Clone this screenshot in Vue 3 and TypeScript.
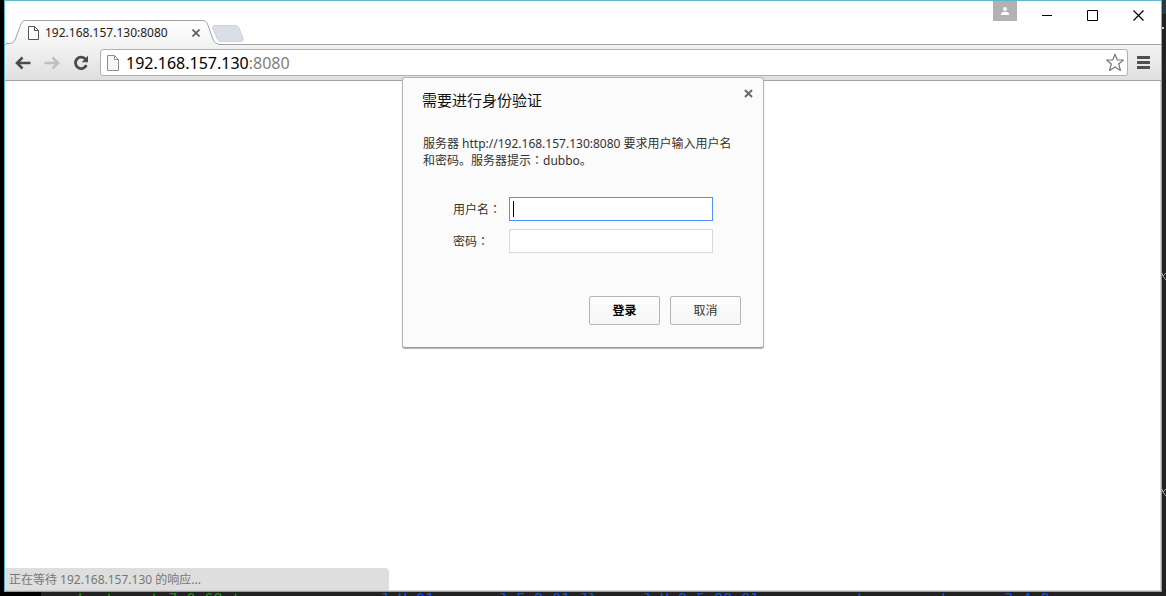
<script setup lang="ts">
import { onMounted, ref } from 'vue'

const host = '192.168.157.130'
const port = ':8080'
const username = ref('')
const password = ref('')
const userField = ref<HTMLInputElement | null>(null)

onMounted(() => userField.value?.focus())
</script>

<template>
  <div class="desktop">
    <div class="browser">
      <header class="titlebar">
        <div class="tab">
          <svg class="tab-shape" width="212" height="25" viewBox="0 0 212 25" aria-hidden="true">
            <defs>
              <linearGradient id="tabFill" x1="0" y1="0" x2="0" y2="1">
                <stop offset="0" stop-color="#ffffff" />
                <stop offset="1" stop-color="#f3f3f3" />
              </linearGradient>
            </defs>
            <path d="M0 25V24H3C6 24 8 22 9 20L15 4C16 1.500 17 .5 20 .5H196C199 .5 200.500 1.500 201.500 4L207 19C208.500 22.500 209 24 212 24V25Z" fill="url(#tabFill)" />
            <path d="M0 23.500H3C6 23.500 8 22 9 20L15 4C16 1.500 17 .5 20 .5H196C199 .5 200.500 1.500 201.500 4L207 19C208.500 22.500 209 23.500 212 23.500" fill="none" stroke="#a3a3a3" />
          </svg>
          <svg class="tab-page" width="11" height="14" viewBox="0 0 11 14" aria-hidden="true">
            <path d="M.5 .5H6.500L10.500 4.500V13.500H.5ZM6.500 .5V4.500H10.500" fill="#fff" stroke="#555" />
          </svg>
          <span class="tab-title">{{ host }}{{ port }}</span>
          <button class="plain tab-close" type="button" aria-label="关闭标签页">
            <svg width="8" height="8" viewBox="0 0 8 8"><path d="M.5 .5L7.500 7.500M7.500 .5L.5 7.500" stroke="#5a5a5a" stroke-width="1.600" /></svg>
          </button>
        </div>
        <button class="plain new-tab" type="button" aria-label="新标签页">
          <svg width="32" height="17" viewBox="0 0 32 17"><path d="M3 .5H23C25 .5 26 1 27 3L31 13C31.500 15.500 31 16.500 29 16.500H9C7 16.500 6 15.500 5 13.500L1 4C0 1.500 1 .5 3 .5Z" fill="#dadee6" stroke="#ced1d8" /></svg>
        </button>
        <div class="spacer"></div>
        <button class="plain profile" type="button" aria-label="用户">
          <svg width="8" height="8" viewBox="0 0 8 8"><circle cx="4" cy="2" r="1.900" fill="#fff" /><path d="M0 8V6.800C0 5.500 2 4.800 4 4.800S8 5.500 8 6.800V8Z" fill="#fff" /></svg>
        </button>
        <button class="plain win" type="button" aria-label="最小化">
          <svg width="11" height="11" viewBox="0 0 11 11"><path d="M0 5.500H10" stroke="#000" /></svg>
        </button>
        <button class="plain win" type="button" aria-label="最大化">
          <svg width="11" height="11" viewBox="0 0 11 11"><path d="M.5 .5H10.500V10.500H.5Z" fill="none" stroke="#000" /></svg>
        </button>
        <button class="plain win win-close" type="button" aria-label="关闭">
          <svg width="11" height="11" viewBox="0 0 11 11"><path d="M.5 .5L10.500 10.500M10.500 .5L.5 10.500" stroke="#000" stroke-width="1.200" /></svg>
        </button>
      </header>

      <nav class="toolbar">
        <button class="plain nav" type="button" aria-label="后退">
          <svg width="16" height="14" viewBox="0 0 16 14"><path d="M7.500 1.500L2 7L7.500 12.500M2 7H15.500" fill="none" stroke="#4b4b4b" stroke-width="2.600" /></svg>
        </button>
        <button class="plain nav" type="button" aria-label="前进">
          <svg width="16" height="14" viewBox="0 0 16 14"><path d="M8.500 1.500L14 7L8.500 12.500M14 7H.5" fill="none" stroke="#c0c0c0" stroke-width="2.600" /></svg>
        </button>
        <button class="plain nav" type="button" aria-label="重新加载">
          <svg width="16" height="16" viewBox="0 0 16 16"><path d="M12.600 4.200A5.700 5.700 0 1 0 13.400 10.200" fill="none" stroke="#4b4b4b" stroke-width="2.800" /><path d="M15 .8V7.200H8.600Z" fill="#4b4b4b" /></svg>
        </button>
        <div class="omnibox">
          <svg width="12" height="16" viewBox="0 0 12 16" aria-hidden="true">
            <path d="M.5 .5H7.500L11.500 4.500V15.500H.5ZM7.500 .5V4.500H11.500" fill="#f7f7f7" stroke="#8c8c8c" />
          </svg>
          <span class="url">{{ host }}<span class="port">{{ port }}</span></span>
          <button class="plain star" type="button" aria-label="添加书签">
            <svg width="20" height="19" viewBox="0 0 20 19"><path d="M10 1.200L12.300 7H18.400L13.700 11L15.400 17.400L10 13.900L4.600 17.400L6.300 11L1.600 7H7.700Z" fill="#fff" stroke="#777" stroke-width="1.200" stroke-linejoin="round" /></svg>
          </button>
        </div>
        <button class="plain menu" type="button" aria-label="菜单">
          <svg width="13" height="13" viewBox="0 0 13 13"><path d="M1 1.500H12M1 6.500H12M1 11.500H12" stroke="#4f4f4f" stroke-width="3" stroke-linecap="round" /></svg>
        </button>
      </nav>

      <main class="viewport"></main>

      <form class="dialog" role="dialog" aria-labelledby="authTitle" @submit.prevent>
        <div class="dialog-head">
          <h1 id="authTitle">需要进行身份验证</h1>
          <button class="plain dialog-close" type="button" aria-label="关闭对话框">
            <svg width="9" height="9" viewBox="0 0 9 9"><path d="M1 1L8 8M8 1L1 8" stroke="#6a6a6a" stroke-width="2" /></svg>
          </button>
        </div>
        <p class="message">服务器 http://{{ host }}{{ port }} 要求用户输入用户名和密码。服务器提示<span class="colon">：</span>dubbo。</p>
        <div class="fields">
          <label for="user">用户名<span class="colon">：</span></label>
          <div class="field">
            <input id="user" ref="userField" v-model="username" type="text" autocomplete="off" />
            <i v-if="!username" class="caret" aria-hidden="true"></i>
          </div>
          <label for="pass">密码<span class="colon">：</span></label>
          <div class="field">
            <input id="pass" v-model="password" type="password" autocomplete="off" />
          </div>
        </div>
        <div class="actions">
          <button class="primary" type="submit">登录</button>
          <button type="button">取消</button>
        </div>
      </form>

      <div class="status">正在等待 {{ host }} 的响应...</div>
    </div>

    <div class="right-edge" aria-hidden="true">
      <i class="dash"></i>
      <svg class="bit one" width="4" height="9" viewBox="0 0 4 9"><path d="M0 1L1 4L4 8M1 4L4 1" fill="none" stroke="#a8a8a8" /></svg>
      <svg class="bit two" width="4" height="9" viewBox="0 0 4 9"><path d="M0 1L1 4L4 8M1 4L4 1" fill="none" stroke="#a8a8a8" /></svg>
    </div>
    <div class="terminal" aria-hidden="true">
      <span class="green">apache-tomcat-7.0.68.tar.gz</span>
      <span>J H 01</span>
      <span>J F 8 01 Jl</span>
      <span>J H 8 5  88 01</span>
      <span>k</span>
      <span>zookeeper-3.4.8</span>
    </div>
  </div>
</template>

<style>
html,
body,
#app {
  height: 100%;
  margin: 0;
}
</style>

<style scoped>
* {
  box-sizing: border-box;
}

.desktop {
  display: grid;
  grid-template-columns: minmax(0, 1fr) 4px;
  grid-template-rows: minmax(0, 1fr) 4px;
  height: 100vh;
  overflow: hidden;
  background: #222;
  color: #333;
  font: 12px/16px "Noto Sans", "Noto Sans CJK SC", sans-serif;
}

.browser {
  position: relative;
  display: flex;
  flex-direction: column;
  border: 1px solid #5bb8c9;
  background: #fff;
  margin-left: 4px;
  box-shadow: -4px 0 #000;
}

.plain {
  display: flex;
  align-items: center;
  justify-content: center;
  padding: 0;
  border: 0;
  background: none;
}

.titlebar {
  display: flex;
  flex: none;
  align-items: flex-start;
  height: 44px;
  background: linear-gradient(#a3a3a3, #a3a3a3) bottom / 100% 1px no-repeat;
  padding-left: 5px;
}

.tab {
  position: relative;
  display: flex;
  align-items: center;
  width: 202px;
  height: 25px;
  margin-top: 19px;
  padding-left: 18px;
}

.tab-shape {
  position: absolute;
  top: 0;
  left: -4px;
}

.tab-page,
.tab-title,
.tab-close {
  position: relative;
}

.tab-title {
  width: 150px;
  padding-left: 6px;
  color: #222;
}

.tab-close {
  width: 14px;
  height: 16px;
}

.new-tab {
  height: 17px;
  margin-top: 24px;
}

.spacer {
  flex: 1;
}

.profile {
  width: 24px;
  height: 20px;
  margin-right: 8px;
  background: #b2b2b2;
}

.win {
  width: 45px;
  height: 28px;
}

.win-close {
  width: 46px;
}

.toolbar {
  display: flex;
  flex: none;
  align-items: center;
  height: 36px;
  padding: 0 10px 0 3px;
  border-bottom: 1px solid #a5a5a5;
  background: linear-gradient(#f3f3f3, #dfdfdf);
}

.nav {
  width: 29px;
  height: 28px;
}

.omnibox {
  display: flex;
  flex: 1;
  align-items: center;
  height: 27px;
  margin-left: 5px;
  padding: 0 2px 0 6px;
  border: 1px solid #b0b0b0;
  border-radius: 3px;
  background: #fff;
}

.url {
  flex: 1;
  padding-left: 7px;
  color: #000;
  font-size: 16px;
  line-height: 24px;
}

.port {
  color: #808080;
}

.star {
  width: 20px;
  height: 24px;
}

.menu {
  width: 15px;
  height: 24px;
  margin-left: 8px;
}

.viewport {
  flex: 1;
  border: solid #d8d8d8;
  border-width: 0 1px 1px 0;
}

.dialog {
  position: absolute;
  top: 76px;
  left: 50%;
  width: 362px;
  padding: 11px 19px 22px;
  transform: translateX(-50%);
  border: 1px solid #b4b4b4;
  border-bottom-color: #999;
  border-radius: 3px;
  background: #fbfbfb;
  box-shadow: 0 1px 1px rgba(0, 0, 0, 0.3);
}

.dialog-head {
  display: flex;
  justify-content: space-between;
}

h1 {
  margin: 0;
  color: #111;
  font-size: 15px;
  font-weight: 400;
  line-height: 22px;
}

.dialog-close {
  width: 16px;
  height: 16px;
  margin: -4px -12px 0 0;
}

.message {
  margin: 25px 8px 0 1px;
}

.colon {
  font-family: "Noto Sans CJK TC", sans-serif;
}

.fields {
  display: grid;
  grid-template-columns: 56px 204px;
  row-gap: 8px;
  align-items: center;
  margin: 28px 0 0 31px;
}

.field {
  position: relative;
  display: flex;
}

.caret {
  position: absolute;
  top: 4px;
  left: 4px;
  width: 1px;
  height: 16px;
  background: #000;
}

input {
  width: 100%;
  height: 24px;
  padding: 0 3px;
  border: 1px solid #d9d9d9;
  outline: 0;
  background: #fff;
  color: #000;
  font: inherit;
}

#user {
  caret-color: transparent;
}

input:focus {
  border-color: #4d90fe;
}

.actions {
  display: flex;
  justify-content: flex-end;
  gap: 10px;
  margin: 43px 3px 0 0;
}

.actions button {
  width: 71px;
  height: 29px;
  padding: 0;
  border: 1px solid #b5b5b5;
  border-radius: 2px;
  background: linear-gradient(#fcfcfc, #f6f6f6);
  color: #333;
  font: inherit;
}

.actions .primary {
  color: #000;
  font-weight: 700;
}

.status {
  position: absolute;
  bottom: 0;
  left: 0;
  width: 384px;
  padding: 4px 4px 2px;
  border-bottom: 1px solid #cfcfcf;
  border-top-right-radius: 4px;
  background: #dedede;
  color: #777;
}

.right-edge {
  position: relative;
  background: linear-gradient(#2a3b42 14px, #222 14px);
}

.dash {
  position: absolute;
  top: 27px;
  left: 0;
  width: 2px;
  height: 2px;
  background: #ccc;
}

.bit {
  position: absolute;
  left: 0;
}

.one {
  top: 272px;
}

.two {
  top: 488px;
}

.terminal {
  display: grid;
  grid-column: 1 / -1;
  grid-template-columns: 338px 118px 144px 215px 57px auto;
  padding-left: 42px;
  overflow: hidden;
  background: linear-gradient(90deg, #000 41px, #222 41px);
  color: #0a4fe8;
  font: 15px/18px "DejaVu Sans Mono", monospace;
  white-space: pre;
}

.green {
  color: #0a9a0a;
}

.terminal span {
  margin-top: -1px;
}
</style>
